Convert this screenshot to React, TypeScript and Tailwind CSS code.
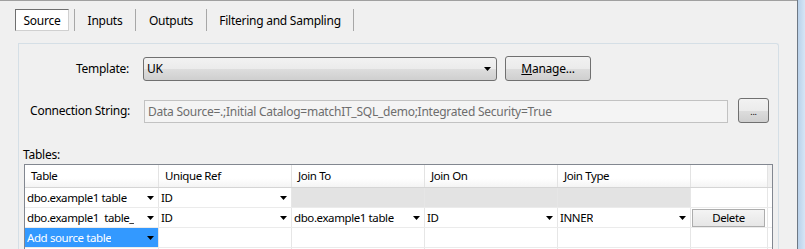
import React from "react";

const Arrow = () => (
  <svg width="7" height="4" viewBox="0 0 7 4" className="shrink-0">
    <path d="M0 0h7L3.5 4z" fill="#000" />
  </svg>
);

const ComboCell = ({ text, width, selected }: { text: string; width: string; selected?: boolean }) => (
  <div
    className={`${width} flex items-center justify-between border-r border-[#e6e6e6] pl-[2px] pr-[4px] ${
      selected ? "bg-[#3399ff] text-white" : "bg-white text-black"
    }`}
  >
    <span className="overflow-hidden whitespace-pre">{text}</span>
    <Arrow />
  </div>
);

const Cell = ({ width, gray, children }: { width: string; gray?: boolean; children?: React.ReactNode }) => (
  <div className={`${width} flex items-center border-r border-[#e6e6e6] ${gray ? "bg-[#e3e3e3]" : "bg-white"}`}>
    {children}
  </div>
);

const cols = ["w-[134px]", "w-[133px]", "w-[133px]", "w-[133px]", "w-[133px]", "w-[77px]"];
const headers = ["Table", "Unique Ref", "Join To", "Join On", "Join Type", ""];

const App = () => {
  return (
    <div className="flex h-[249px] w-[805px] overflow-hidden bg-[#f0f0f0] font-['Noto_Sans',sans-serif] text-[12px] tracking-[-0.25px] text-black">
      <div className="flex w-[797px] flex-col border-t border-[#a0a0a0]">
        {/* tabs */}
        <div className="ml-[15px] mt-[8px] flex h-[23px] items-stretch">
          <div className="flex w-[54px] items-center justify-center border border-t-[#6f6f6f] border-l-[#6f6f6f] border-r-[#d0d0d0] border-b-[#d0d0d0] bg-white pt-[2px]">
            Source
          </div>
          <div className="ml-[5px] w-px bg-[#a7a7a7]" />
          <div className="flex w-[60px] items-center justify-center pt-[2px]">Inputs</div>
          <div className="w-px bg-[#a7a7a7]" />
          <div className="flex w-[70px] items-center justify-center pt-[2px]">Outputs</div>
          <div className="w-px bg-[#a7a7a7]" />
          <div className="flex w-[146px] items-center justify-center pt-[2px]">Filtering and Sampling</div>
          <div className="w-px bg-[#a7a7a7]" />
        </div>

        {/* panel */}
        <div className="ml-[18px] mt-[12px] flex w-[761px] flex-1 flex-col rounded-tr-[3px] border border-b-0 border-[#d5dfe6]">
          <div className="mt-[12px] flex h-[25px] items-center">
            <div className="w-[110px] text-right">Template:</div>
            <div className="ml-[14px] flex h-[24px] w-[354px] items-center justify-between rounded-[3px] border border-[#707070] bg-[linear-gradient(#f2f2f2_0%,#ebebeb_50%,#dddddd_51%,#cfcfcf_100%)] pl-[3px] pr-[5px]">
              <span>UK</span>
              <Arrow />
            </div>
            <div className="ml-[8px] flex h-[25px] w-[86px] items-center justify-center rounded-[3px] border border-[#707070] bg-[linear-gradient(#f2f2f2_0%,#ebebeb_50%,#dddddd_51%,#cfcfcf_100%)]">
              <span>
                <span className="underline">M</span>anage...
              </span>
            </div>
          </div>

          <div className="mt-[17px] flex h-[25px] items-center">
            <div className="w-[111px] text-right">Connection String:</div>
            <div className="ml-[14px] mt-[2px] flex h-[23px] w-[584px] items-center border border-[#c2c2c2] bg-[#f4f4f4] pl-[3px] text-[#6d6d6d]">
              Data Source=.;Initial Catalog=matchIT_SQL_demo;Integrated Security=True
            </div>
            <div className="ml-[10px] flex h-[25px] w-[31px] items-center justify-center rounded-[3px] border border-[#707070] bg-[linear-gradient(#f2f2f2_0%,#ebebeb_50%,#dddddd_51%,#cfcfcf_100%)] pt-[3px] text-[9px]">
              ...
            </div>
          </div>

          <div className="ml-[4px] mt-[24px] leading-[15px]">Tables:</div>

          {/* grid */}
          <div className="ml-[5px] mt-[2px] flex w-[749px] flex-1 flex-col border border-b-0 border-[#828790] bg-white text-[11.5px] tracking-[-0.4px]">
            <div className="flex h-[23px] border-b border-[#d5d5d5] bg-[linear-gradient(#ffffff_0%,#ffffff_60%,#f4f4f4_100%)]">
              {headers.map((h, i) => (
                <div key={i} className={`${cols[i]} flex items-center border-r border-[#e3e3e3] pl-[6px]`}>
                  {h}
                </div>
              ))}
              <div className="flex-1 bg-[#f0f0f0]" />
            </div>

            <div className="flex h-[20px] border-b border-[#ebebeb]">
              <ComboCell width={cols[0]} text="dbo.example1 table" />
              <ComboCell width={cols[1]} text="ID" />
              <Cell width={cols[2]} gray />
              <Cell width={cols[3]} gray />
              <Cell width={cols[4]} gray />
              <Cell width={cols[5]} />
              <div className="flex-1" />
            </div>

            <div className="flex h-[20px] border-b border-[#ebebeb]">
              <ComboCell width={cols[0]} text="dbo.example1  table_" />
              <ComboCell width={cols[1]} text="ID" />
              <ComboCell width={cols[2]} text="dbo.example1 table" />
              <ComboCell width={cols[3]} text="ID" />
              <ComboCell width={cols[4]} text="INNER" />
              <Cell width={cols[5]}>
                <div className="ml-[1px] flex h-[18px] w-[73px] items-center justify-center border border-[#adadad] bg-[linear-gradient(#f4f4f4,#e6e6e6)]">
                  Delete
                </div>
              </Cell>
              <div className="flex-1" />
            </div>

            <div className="flex h-[20px] border-b border-[#ebebeb]">
              <ComboCell width={cols[0]} text="Add source table" selected />
              <Cell width={cols[1]} />
              <Cell width={cols[2]} />
              <Cell width={cols[3]} />
              <Cell width={cols[4]} />
              <Cell width={cols[5]} />
              <div className="flex-1" />
            </div>
            <div className="flex h-[20px]">
              {cols.map((c, i) => (
                <Cell key={i} width={c} />
              ))}
            </div>
          </div>
        </div>
      </div>
      <div className="w-[8px] border-l border-[#6e7884] bg-[linear-gradient(90deg,#b9d1ea,#d6e5f5)]" />
    </div>
  );
};

export default App;
